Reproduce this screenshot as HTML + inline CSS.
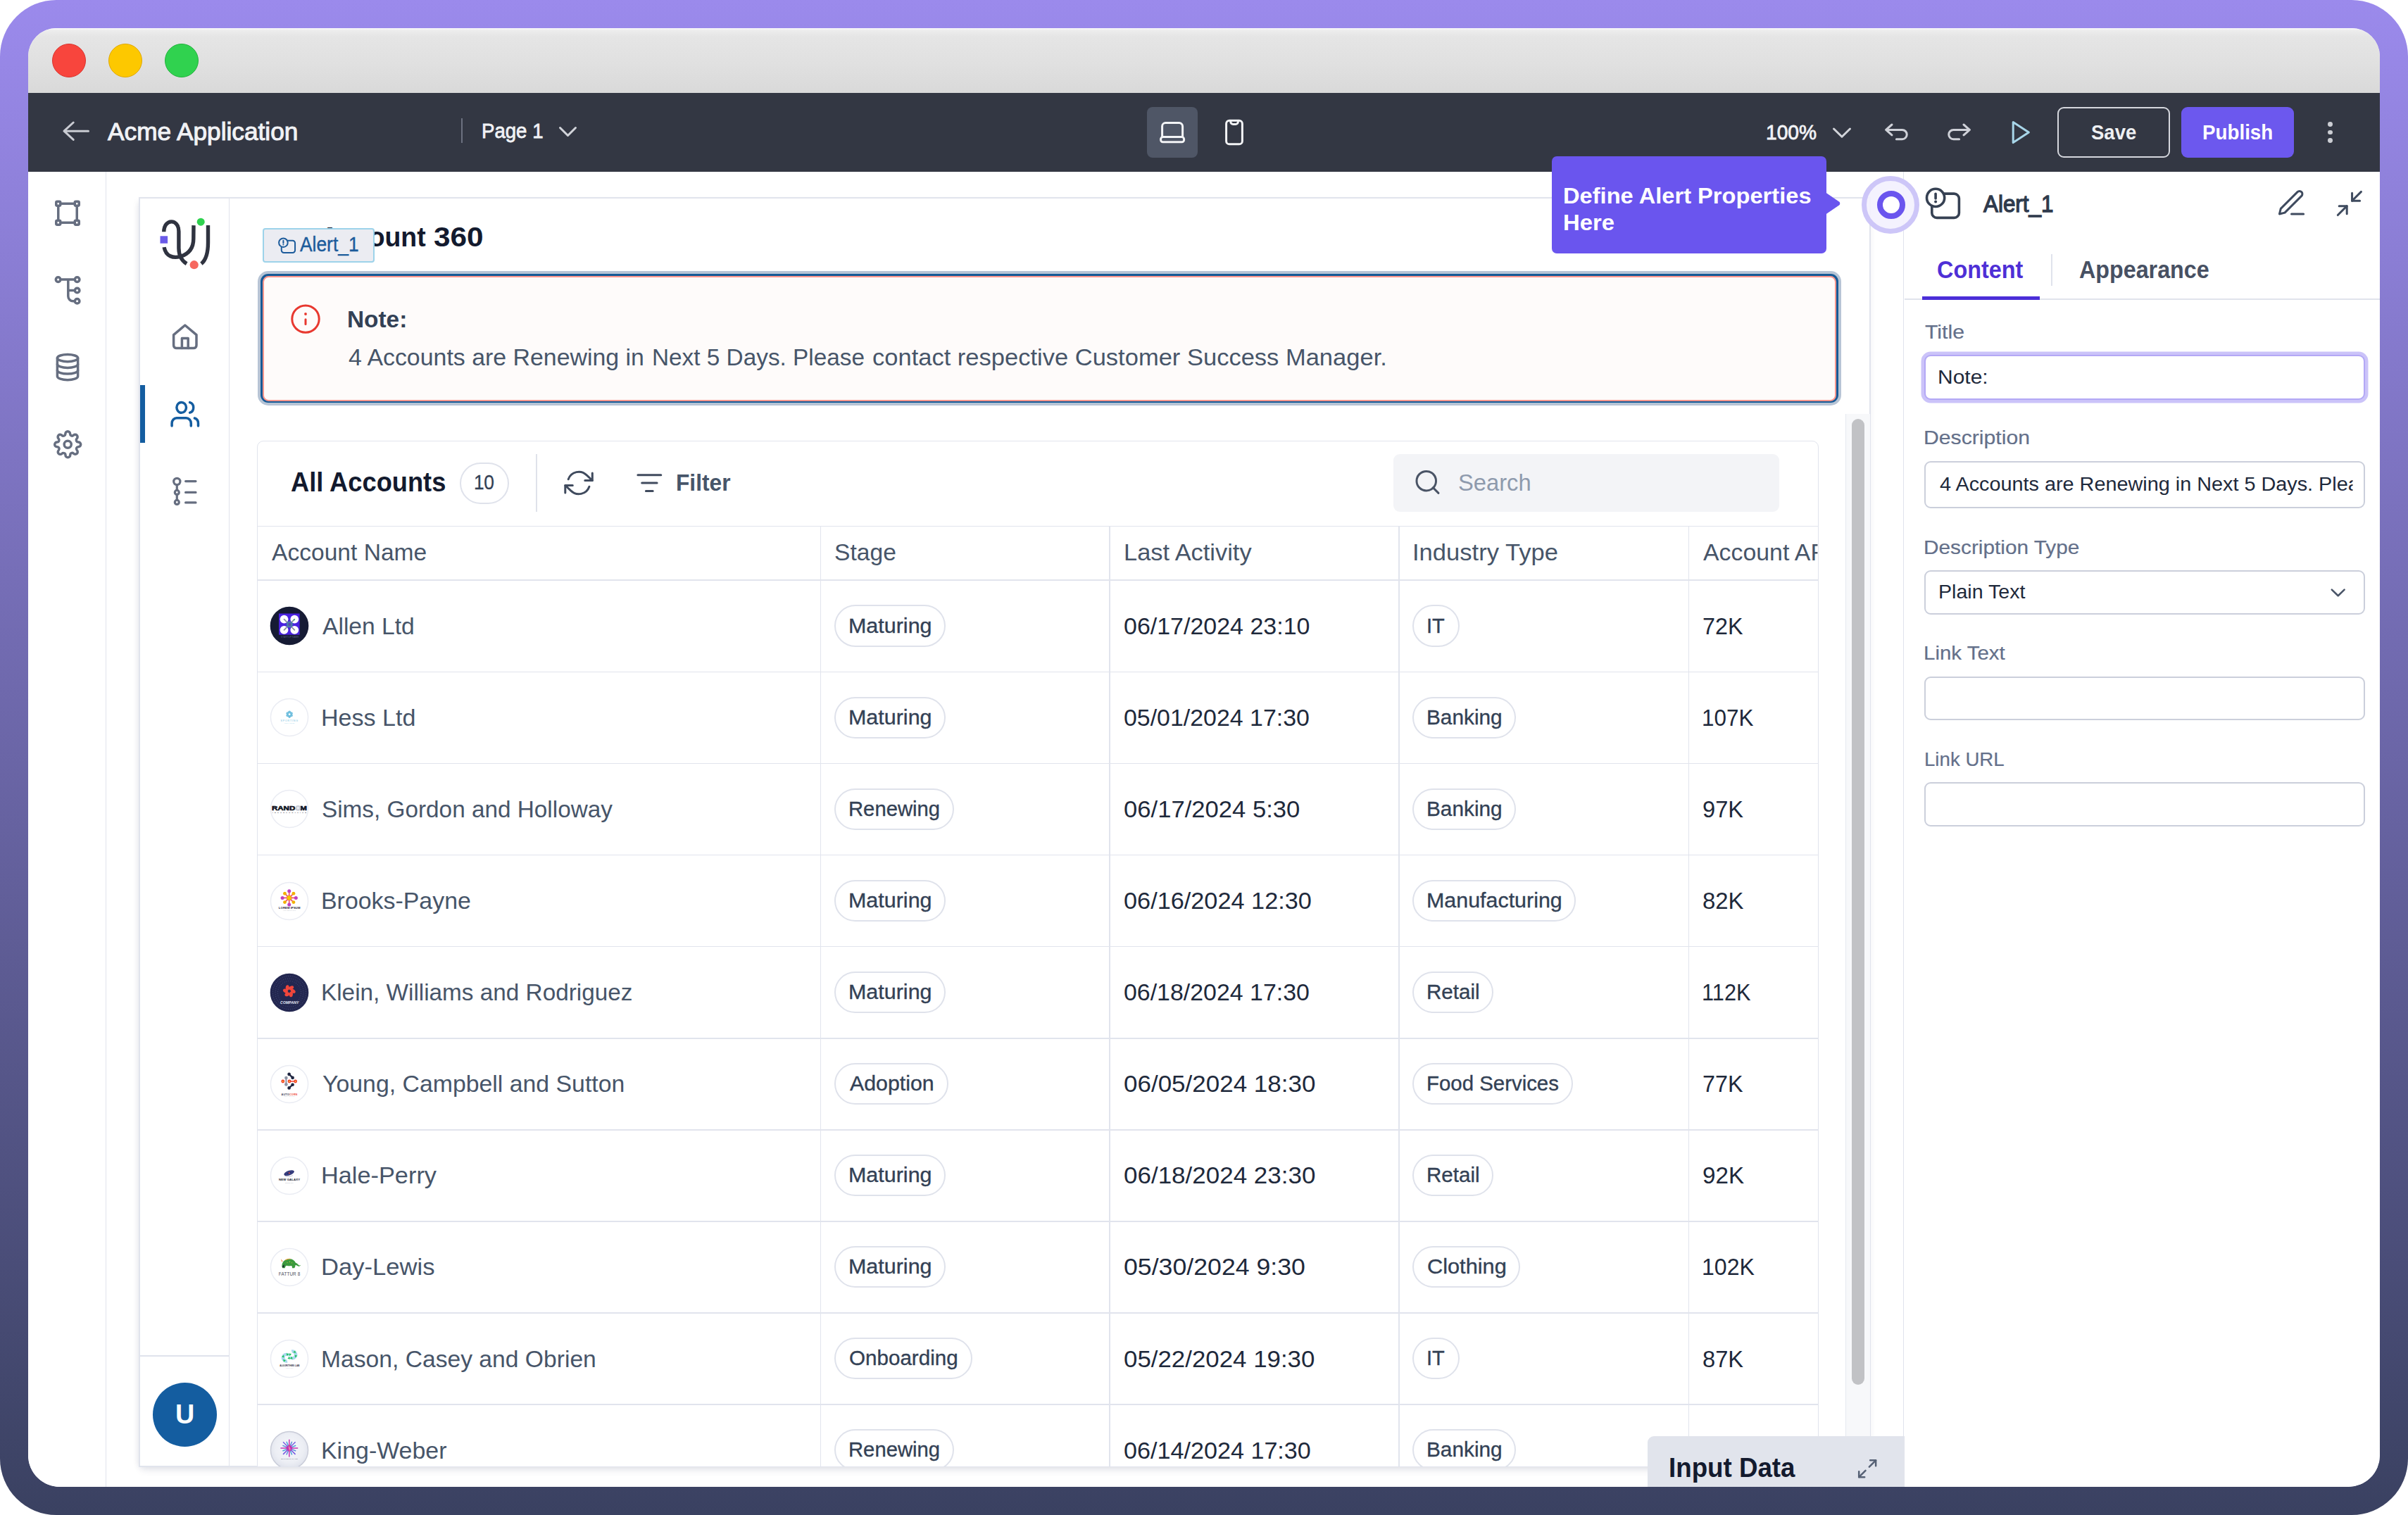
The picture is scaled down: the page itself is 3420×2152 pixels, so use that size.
<!DOCTYPE html><html lang="en"><head><meta charset="utf-8"><title>Acme Application</title><style>
*{box-sizing:border-box;margin:0;padding:0}
html,body{width:3420px;height:2152px;overflow:hidden;background:#fff}
body{font-family:"Liberation Sans",sans-serif;position:relative}
.a{position:absolute}
.i{position:absolute;overflow:visible;display:block}
.t{position:absolute;white-space:nowrap;line-height:1;transform-origin:0 0;font-kerning:normal}
#frame{left:0;top:0;width:3420px;height:2152px;border-radius:80px;background:linear-gradient(180deg,#9b8aec 0%,#3a4161 100%)}
#win{left:0;top:0;width:3420px;height:2152px;clip-path:inset(40px 40px 40px 40px round 40px 40px 45px 45px);background:#fff}
#mac{left:40px;top:40px;width:3340px;height:92px;background:linear-gradient(180deg,#fbfbfb 0px,#ededed 3px,#e5e5e5 12px,#e0e0e0 52px,#d9d9d9 92px)}
.tl{border-radius:50%;width:48px;height:48px;top:62px}
#nav{left:40px;top:132px;width:3340px;height:112px;background:#333743}
#side{left:40px;top:244px;width:110.5px;height:1868px;background:#fff;border-right:1.5px solid #e0e3ec}
#app{left:197.3px;top:280.3px;width:2459.6px;height:1803.4px;background:#fff;border:2px solid #e1e4ed;box-shadow:0 7px 10px -3px rgba(40,50,90,.11),-4px 2px 9px -4px rgba(40,50,90,.10)}
#appside{left:199px;top:282px;width:127px;height:1800px;border-right:1.5px solid #e0e3ec}
#panel{left:2703px;top:244px;width:677px;height:1868px;background:#fff;border-left:1.5px solid #e0e3ec}
.chip{position:absolute;height:59.2px;border:2px solid #dfe2eb;border-radius:30px;background:#fff}
.hl{position:absolute;height:1.5px;background:#e1e4ed;left:365px;width:2217px}
.vl{position:absolute;width:1.5px;background:#e1e4ed;top:747px;height:1336px}
.inp{position:absolute;left:2733px;width:626px;border:2px solid #cbcfdb;border-radius:9px;background:#fff}
</style></head><body>
<div class="a" id="frame"></div><div class="a" id="win">
<div class="a" id="mac"></div>
<div class="a tl" style="left:74px;background:#f8453d;border:1px solid #d8352e"></div>
<div class="a tl" style="left:154px;background:#fdc800;border:1px solid #dfa800"></div>
<div class="a tl" style="left:233.5px;background:#30d24f;border:1px solid #22b23c"></div>
<div class="a" id="nav"></div>
<svg class="i" style="left:80px;top:160px;" width="60" height="52" viewBox="80 160 60 52"><g fill="none" stroke="#c9cbd2" stroke-width="3" stroke-linecap="round" stroke-linejoin="round"><path d="M125.5 186.2H91M104.2 174L91 186.2l13.2 12.2"/></g></svg>
<span class="t" style="left:153.30px;top:169.67px;font-size:34.3px;font-weight:400;color:#f1f2f5;transform:scaleX(1.0277);letter-spacing:0.000px;-webkit-text-stroke:1.0px #f1f2f5;">Acme Application</span>
<div class="a" style="left:655px;top:168px;width:2px;height:35px;background:#6c7180"></div>
<span class="t" style="left:683.96px;top:171.43px;font-size:30.09px;font-weight:400;color:#f1f2f5;transform:scaleX(0.9179);letter-spacing:0.000px;-webkit-text-stroke:0.8px #f1f2f5;">Page 1</span>
<svg class="i" style="left:786px;top:172px;" width="42" height="30" viewBox="786 172 42 30"><g fill="none" stroke="#d2d4da" stroke-width="3" stroke-linecap="round" stroke-linejoin="round"><path d="M795.5 181.5l11 11 11-11"/></g></svg>
<div class="a" style="left:1629px;top:152px;width:72px;height:72px;border-radius:8px;background:#4f5666"></div>
<svg class="i" style="left:1640px;top:165px;" width="50" height="45" viewBox="1640 165 50 45"><g fill="none" stroke="#f3f4f6" stroke-width="3" stroke-linecap="round" stroke-linejoin="round"><path d="M1650.6 194.6V179.4a4.8 4.8 0 0 1 4.8-4.8h19.4a4.8 4.8 0 0 1 4.8 4.8V194.6"/><rect x="1648.6" y="194.6" width="33" height="7.2" rx="3"/></g></svg>
<svg class="i" style="left:1735px;top:165px;" width="37" height="47" viewBox="1735 165 37 47"><g fill="none" stroke="#f3f4f6" stroke-width="3" stroke-linecap="round" stroke-linejoin="round"><rect x="1741.6" y="171.3" width="22.8" height="33.5" rx="4.4"/><path d="M1747.8 171.8v1.2a3.6 3.6 0 0 0 3.6 3.6h3.4a3.6 3.6 0 0 0 3.6-3.6v-1.2"/></g></svg>
<span class="t" style="left:2507.89px;top:173.02px;font-size:29.51px;font-weight:400;color:#f1f2f5;transform:scaleX(0.9560);letter-spacing:0.000px;-webkit-text-stroke:0.8px #f1f2f5;">100%</span>
<svg class="i" style="left:2596px;top:174px;" width="40" height="30" viewBox="2596 174 40 30"><g fill="none" stroke="#d2d4da" stroke-width="3" stroke-linecap="round" stroke-linejoin="round"><path d="M2604.5 183l11.5 11.2 11.5-11.2"/></g></svg>
<svg class="i" style="left:2670px;top:168px;" width="46" height="38" viewBox="2670 168 46 38"><g fill="none" stroke="#cfd1d8" stroke-width="3" stroke-linecap="round" stroke-linejoin="round"><path d="M2687 177l-8.4 7.4 8.4 7.4M2678.8 184.4H2701.6a6.65 6.65 0 0 1 0 13.3H2693.4"/></g></svg>
<svg class="i" style="left:2760px;top:168px;" width="46" height="38" viewBox="2760 168 46 38"><g fill="none" stroke="#cfd1d8" stroke-width="3" stroke-linecap="round" stroke-linejoin="round"><path d="M2789 177l8.4 7.4-8.4 7.4M2797.2 184.4H2774.4a6.65 6.65 0 0 0 0 13.3H2782.6"/></g></svg>
<svg class="i" style="left:2850px;top:165px;" width="40" height="45" viewBox="2850 165 40 45"><g fill="none" stroke="#a8d6e9" stroke-width="3" stroke-linecap="round" stroke-linejoin="round"><path d="M2859.2 173.4L2881.4 188l-22.2 14.6z"/></g></svg>
<div class="a" style="left:2922px;top:152px;width:160px;height:72px;border:2px solid #d5d7dd;border-radius:9px"></div>
<span class="t" style="left:2970.30px;top:172.28px;font-size:30.38px;font-weight:700;color:#eef0f3;transform:scaleX(0.9065);letter-spacing:0.000px;">Save</span>
<div class="a" style="left:3098px;top:152px;width:160px;height:72px;border-radius:9px;background:#6c58ee"></div>
<span class="t" style="left:3127.67px;top:172.28px;font-size:30.38px;font-weight:700;color:#fff;transform:scaleX(0.9139);letter-spacing:0.000px;">Publish</span>
<div class="a" style="left:3306.2999999999997px;top:172.79999999999998px;width:6.8px;height:6.8px;border-radius:50%;background:#cbcdd3"></div>
<div class="a" style="left:3306.2999999999997px;top:184.7px;width:6.8px;height:6.8px;border-radius:50%;background:#cbcdd3"></div>
<div class="a" style="left:3306.2999999999997px;top:196.4px;width:6.8px;height:6.8px;border-radius:50%;background:#cbcdd3"></div>
<div class="a" id="side"></div>
<svg class="i" style="left:70px;top:276px;" width="52" height="54" viewBox="70 276 52 54"><g fill="none" stroke="#666e80" stroke-width="3.5" stroke-linecap="round" stroke-linejoin="round"><rect x="79.75" y="286.25" width="6" height="6" rx="1.4"/><rect x="106.25" y="286.25" width="6" height="6" rx="1.4"/><rect x="79.75" y="313.25" width="6" height="6" rx="1.4"/><rect x="106.25" y="313.25" width="6" height="6" rx="1.4"/><path d="M87.6 289.25H104.4M87.6 316.25H104.4M82.75 294.1V311.4M109.25 294.1V311.4"/></g></svg>
<svg class="i" style="left:70px;top:385px;" width="52" height="55" viewBox="70 385 52 55"><g fill="none" stroke="#666e80" stroke-width="3.5" stroke-linecap="round" stroke-linejoin="round"><circle cx="82.6" cy="397.1" r="3.3"/><circle cx="109.6" cy="397.1" r="3.3"/><circle cx="109.6" cy="412.5" r="3.3"/><circle cx="109.6" cy="427.7" r="3.3"/><path d="M87.7 397.1H104.5M96.8 397.1V420.7a7 7 0 0 0 7 7h0.7M96.8 412.5H104.5"/></g></svg>
<svg class="i" style="left:70px;top:495px;" width="52" height="53" viewBox="70 495 52 53"><g fill="none" stroke="#666e80" stroke-width="3.5" stroke-linecap="round" stroke-linejoin="round"><ellipse cx="96" cy="508.6" rx="14.6" ry="5.1"/><path d="M81.4 508.6V534.6c0 2.8 6.5 5.1 14.6 5.1s14.6-2.3 14.6-5.1V508.6"/><path d="M81.4 517.3c0 2.8 6.5 5.1 14.6 5.1s14.6-2.3 14.6-5.1M81.4 526c0 2.8 6.5 5.1 14.6 5.1s14.6-2.3 14.6-5.1"/></g></svg>
<svg class="i" style="left:70px;top:605px;" width="52" height="53" viewBox="70 605 52 53"><g transform="translate(76.04,611.14) scale(1.68,1.68)" fill="none" stroke="#666e80" stroke-width="3.5" stroke-linecap="round" stroke-linejoin="round"><circle cx="12" cy="12" r="3" vector-effect="non-scaling-stroke"/><path d="M19.4 15a1.65 1.65 0 0 0 .33 1.82l.06.06a2 2 0 0 1 0 2.83 2 2 0 0 1-2.83 0l-.06-.06a1.65 1.65 0 0 0-1.82-.33 1.65 1.65 0 0 0-1 1.51V21a2 2 0 0 1-2 2 2 2 0 0 1-2-2v-.09A1.65 1.65 0 0 0 9 19.4a1.65 1.65 0 0 0-1.82.33l-.06.06a2 2 0 0 1-2.83 0 2 2 0 0 1 0-2.83l.06-.06a1.65 1.65 0 0 0 .33-1.82 1.65 1.65 0 0 0-1.51-1H3a2 2 0 0 1-2-2 2 2 0 0 1 2-2h.09A1.65 1.65 0 0 0 4.6 9a1.65 1.65 0 0 0-.33-1.82l-.06-.06a2 2 0 0 1 0-2.83 2 2 0 0 1 2.83 0l.06.06a1.65 1.65 0 0 0 1.82.33H9a1.65 1.65 0 0 0 1-1.51V3a2 2 0 0 1 2-2 2 2 0 0 1 2 2v.09a1.65 1.65 0 0 0 1 1.51 1.65 1.65 0 0 0 1.82-.33l.06-.06a2 2 0 0 1 2.83 0 2 2 0 0 1 0 2.83l-.06.06a1.65 1.65 0 0 0-.33 1.82V9a1.65 1.65 0 0 0 1.51 1H21a2 2 0 0 1 2 2 2 2 0 0 1-2 2h-.09a1.65 1.65 0 0 0-1.51 1z" vector-effect="non-scaling-stroke"/></g></svg>
<div class="a" id="app"></div><div class="a" id="appside"></div>
<svg class="i" style="left:220px;top:300px;" width="86" height="92" viewBox="220 300 86 92"><g fill="none" stroke="#2f3340" stroke-width="5.4" stroke-linecap="butt" stroke-linejoin="round"><path d="M232.8 329.3 C232.8 310.2 253.9 310.2 253.9 328.7 L253.9 352.4 C253.9 364.3 259.2 370.9 265.1 374.6"/><path d="M233.1 351.1 C235.4 364.3 246.0 367.2 256.6 364.3 C268.4 360.4 274.8 352.4 274.8 339.2 L275.0 320.1"/><path d="M295.5 320.1 L295.5 344.5 C295.5 360.4 292.2 369.6 285.9 374.6"/></g><rect x="227.5" y="335.3" width="10.6" height="10.4" fill="#6b5be8"/><circle cx="285.2" cy="315.2" r="5.5" fill="#2fd24f"/><circle cx="275.7" cy="376.2" r="6.1" fill="#f6685f"/></svg>
<svg class="i" style="left:238px;top:452px;" width="50" height="50" viewBox="238 452 50 50"><g fill="none" stroke="#666e80" stroke-width="3.5" stroke-linecap="round" stroke-linejoin="round"><path d="M246.6 475.6L262.8 462l16.2 13.6V490.6a4 4 0 0 1-4 4H250.6a4 4 0 0 1-4-4z"/><path d="M258.4 494.4V480.4h8.8V494.4"/></g></svg>
<div class="a" style="left:199px;top:547px;width:6.8px;height:82px;background:#145da0"></div>
<svg class="i" style="left:236px;top:562px;" width="54" height="52" viewBox="236 562 54 52"><g transform="translate(242.4,565.8) scale(1.7000000000000002,1.866666666666668)" fill="none" stroke="#145da0" stroke-width="3.5" stroke-linecap="round" stroke-linejoin="round"><path d="M17 21v-2a4 4 0 0 0-4-4H5a4 4 0 0 0-4 4v2" vector-effect="non-scaling-stroke"/><circle cx="9" cy="7" r="4" vector-effect="non-scaling-stroke"/><path d="M23 21v-2a4 4 0 0 0-3-3.87" vector-effect="non-scaling-stroke"/><path d="M16 3.13a4 4 0 0 1 0 7.75" vector-effect="non-scaling-stroke"/></g></svg>
<svg class="i" style="left:238px;top:670px;" width="50" height="54" viewBox="238 670 50 54"><g fill="none" stroke="#666e80" stroke-width="3.2" stroke-linecap="round" stroke-linejoin="round"><circle cx="251.3" cy="684" r="4.6"/><circle cx="251.3" cy="699.4" r="3"/><circle cx="251.3" cy="713.4" r="3"/><path d="M251.3 688.6V696.4M251.3 702.4V710.4M263.6 683.6H278M263.6 699.4H278M263.6 713.9H278"/></g></svg>
<div class="a" style="left:199px;top:1925px;width:126px;height:1.5px;background:#e0e3ec"></div>
<div class="a" style="left:217px;top:1964px;width:91px;height:91px;border-radius:50%;background:#145da0"></div>
<span class="t" style="left:249.04px;top:1990.39px;font-size:38.52px;font-weight:700;color:#fff;transform:scaleX(0.9792);letter-spacing:0.000px;">U</span>
<span class="t" style="left:455.00px;top:316.78px;font-size:39.24px;font-weight:700;color:#131a2e;transform:scaleX(0.9536);letter-spacing:0.000px;">Account</span>
<span class="t" style="left:616.20px;top:316.78px;font-size:39.24px;font-weight:700;color:#131a2e;transform:scaleX(1.0783);letter-spacing:0.000px;">360</span>
<div class="a" style="left:373px;top:323.5px;width:158.5px;height:49.5px;background:#ebecf2;border:2px solid #9dd3ea;border-radius:4px"></div>
<svg class="i" style="left:390px;top:332px;" width="34" height="34" viewBox="390 332 34 34"><g fill="none" stroke="#1c5b9b" stroke-width="2" stroke-linecap="round" stroke-linejoin="round"><circle cx="402.4" cy="344.7" r="6.30"/><path d="M408.15 341.80 H415.55 a3.50 3.50 0 0 1 3.50 3.50 V355.45 a3.50 3.50 0 0 1 -3.50 3.50 H403.25 a3.50 3.50 0 0 1 -3.50 -3.50 V350.65"/><line x1="402.4" y1="341.85" x2="402.4" y2="345.20"/></g><circle cx="402.4" cy="347.50" r="1.00" fill="#1c5b9b" stroke="none"/></svg>
<span class="t" style="left:426.30px;top:333.39px;font-size:29.07px;font-weight:400;color:#1c5b9b;transform:scaleX(0.9074);letter-spacing:0.000px;-webkit-text-stroke:0.4px #1c5b9b;">Alert_1</span>
<div class="a" style="left:365.6px;top:385px;width:2249.6px;height:191.4px;border-radius:15px;background:#b7c4d5"></div>
<div class="a" style="left:370px;top:389.3px;width:2241px;height:182.8px;border-radius:11px;background:#165a96"></div>
<div class="a" style="left:372.6px;top:391.8px;width:2235.8px;height:177.8px;border-radius:8.5px;background:#fefbfa;border:2.1px solid #ff968c"></div>
<svg class="i" style="left:410px;top:430px;" width="48" height="48" viewBox="410 430 48 48"><g fill="none" stroke="#e8382f" stroke-width="3" stroke-linecap="round" stroke-linejoin="round"><circle cx="434" cy="453.1" r="19.2"/><line x1="434" y1="453.8" x2="434" y2="460.6"/></g><circle cx="434" cy="446" r="1.9" fill="#e8382f"/></svg>
<span class="t" style="left:492.99px;top:436.75px;font-size:33.14px;font-weight:700;color:#334155;transform:scaleX(1.0074);letter-spacing:-0.000px;">Note:</span>
<span class="t" style="left:495.00px;top:491.92px;font-size:32.7px;font-weight:400;color:#475569;transform:scaleX(1.0364);letter-spacing:0.000px;">4 Accounts are Renewing in </span>
<span class="t" style="left:926.46px;top:491.92px;font-size:32.7px;font-weight:400;color:#475569;transform:scaleX(1.0200);letter-spacing:0.000px;">Next 5 Days. Please </span>
<span class="t" style="left:1238.54px;top:491.92px;font-size:32.7px;font-weight:400;color:#475569;transform:scaleX(1.0558);letter-spacing:0.000px;">contact respective Customer Success Manager.</span>
<div class="a" style="left:0;top:0;width:3420px;height:2082.5px;overflow:hidden">
<div class="a" style="left:364.5px;top:625.5px;width:2218.5px;height:1470px;border:1.5px solid #e1e4ed;border-radius:9px 9px 0 0;background:#fff"></div>
<span class="t" style="left:412.50px;top:666.44px;font-size:38.23px;font-weight:700;color:#131a2e;transform:scaleX(0.9491);letter-spacing:0.000px;">All Accounts</span>
<div class="a chip" style="left:652.5px;top:656.5px;width:70.5px;height:59px;border-radius:30px"></div>
<span class="t" style="left:673.40px;top:670.77px;font-size:29.22px;font-weight:400;color:#334155;transform:scaleX(0.9000);letter-spacing:-0.472px;-webkit-text-stroke:0.3px #334155;">10</span>
<div class="a" style="left:761px;top:645px;width:2px;height:82px;background:#dfe2ea"></div>
<svg class="i" style="left:795px;top:660px;" width="55" height="52" viewBox="795 660 55 52"><g transform="translate(801.05,665.0) scale(1.75,1.75)" fill="none" stroke="#404b5e" stroke-width="3" stroke-linecap="round" stroke-linejoin="round"><polyline points="23 4 23 10 17 10" vector-effect="non-scaling-stroke"/><polyline points="1 20 1 14 7 14" vector-effect="non-scaling-stroke"/><path d="M3.51 9a9 9 0 0 1 14.85-3.36L23 10M1 14l4.64 4.36A9 9 0 0 0 20.49 15" vector-effect="non-scaling-stroke"/></g></svg>
<svg class="i" style="left:898px;top:666px;" width="48" height="40" viewBox="898 666 48 40"><g fill="none" stroke="#404b5e" stroke-width="3" stroke-linecap="round" stroke-linejoin="round"><path d="M905.9 674.7H938.8M911.7 686.1H933.1M917.4 697.6H927.2"/></g></svg>
<span class="t" style="left:959.63px;top:669.43px;font-size:33.87px;font-weight:700;color:#475569;transform:scaleX(0.9367);letter-spacing:0.000px;">Filter</span>
<div class="a" style="left:1979px;top:645px;width:548px;height:82px;border-radius:9px;background:#f3f4f7"></div>
<svg class="i" style="left:2004px;top:662px;" width="50" height="48" viewBox="2004 662 50 48"><g transform="translate(2006.84,664.24) scale(1.72,1.72)" fill="none" stroke="#4a5466" stroke-width="3" stroke-linecap="round" stroke-linejoin="round"><circle cx="11" cy="11" r="8" vector-effect="non-scaling-stroke"/><line x1="21" y1="21" x2="16.65" y2="16.65" vector-effect="non-scaling-stroke"/></g></svg>
<span class="t" style="left:2071.43px;top:668.66px;font-size:33.72px;font-weight:400;color:#8e9aad;transform:scaleX(0.9704);letter-spacing:0.000px;">Search</span>
<div class="hl" style="top:746.5px"></div><div class="hl" style="top:823.2px"></div>
<div class="vl" style="left:1164.5px"></div>
<div class="vl" style="left:1575px"></div>
<div class="vl" style="left:1986.3px"></div>
<div class="vl" style="left:2397.5px"></div>
<span class="t" style="left:386.00px;top:769.29px;font-size:32.85px;font-weight:400;color:#475569;transform:scaleX(1.0231);letter-spacing:0.000px;">Account Name</span>
<span class="t" style="left:1185.48px;top:769.29px;font-size:32.85px;font-weight:400;color:#475569;transform:scaleX(1.0236);letter-spacing:0.000px;">Stage</span>
<span class="t" style="left:1596.20px;top:769.29px;font-size:32.85px;font-weight:400;color:#475569;transform:scaleX(1.0476);letter-spacing:0.000px;">Last Activity</span>
<span class="t" style="left:2005.64px;top:769.29px;font-size:32.85px;font-weight:400;color:#475569;transform:scaleX(1.0529);letter-spacing:0.000px;">Industry Type</span>
<span class="t" style="left:2419.00px;top:769.29px;font-size:32.85px;font-weight:400;color:#475569;transform:scaleX(1.0311);letter-spacing:0.000px;clip-path:inset(-10px 14px -10px -5px);">Account AR</span>
<div class="hl" style="top:953.6px"></div>
<svg class="i" style="left:381.3px;top:859.2px" width="60" height="60" viewBox="381.3 859.2 60 60"><defs><clipPath id="c889"><circle cx="411.3" cy="889.1999999999999" r="26.6"/></clipPath></defs><circle cx="411.3" cy="889.1999999999999" r="26.55" fill="#161b34" stroke="#161b34" stroke-width="1.5"/><g clip-path="url(#c889)"><rect x="396.3" y="871.6999999999999" width="29.6" height="30.2" fill="#4a22e0"/><circle cx="403.8" cy="879.8" r="5.9" fill="#fff"/><circle cx="403.8" cy="894.9999999999999" r="5.9" fill="#fff"/><circle cx="418.6" cy="879.8" r="5.9" fill="#fff"/><circle cx="418.6" cy="894.9999999999999" r="5.9" fill="#fff"/><path d="M403.8 879.8L418.6 894.9999999999999M418.6 879.8L403.8 894.9999999999999" stroke="#8d93a3" stroke-width="1.8" stroke-linecap="round"/><circle cx="411.6" cy="887.1999999999999" r="4.6" fill="#4878ad"/><circle cx="411.6" cy="887.1999999999999" r="2" fill="#5a4aa8"/><circle cx="418.0" cy="880.5999999999999" r="0.9" fill="#22c55e"/><text x="412.1" y="906.7" font-family="Liberation Sans, sans-serif" font-size="2.9" font-weight="400" fill="#59607e" text-anchor="middle" letter-spacing="0.25" >STARTUP NAME</text></g></svg>
<span class="t" style="left:458.30px;top:872.73px;font-size:33.87px;font-weight:400;color:#475569;transform:scaleX(0.9928);letter-spacing:0.000px;">Allen Ltd</span>
<div class="chip" style="left:1185px;top:859.4px;width:158.3px"></div>
<span class="t" style="left:1204.97px;top:873.56px;font-size:29.94px;font-weight:400;color:#334155;transform:scaleX(1.0175);letter-spacing:0.000px;-webkit-text-stroke:0.35px #334155;">Maturing</span>
<span class="t" style="left:1596.40px;top:872.73px;font-size:33.87px;font-weight:400;color:#1e293b;transform:scaleX(1.0032);letter-spacing:0.000px;">06/17/2024 23:10</span>
<div class="chip" style="left:2006.2px;top:859.4px;width:66.6px"></div>
<span class="t" style="left:2026.26px;top:873.56px;font-size:29.94px;font-weight:400;color:#334155;transform:scaleX(0.9705);letter-spacing:0.000px;-webkit-text-stroke:0.35px #334155;">IT</span>
<span class="t" style="left:2417.65px;top:872.73px;font-size:33.87px;font-weight:400;color:#1e293b;transform:scaleX(0.9537);letter-spacing:0.000px;">72K</span>
<div class="hl" style="top:1083.7px"></div>
<svg class="i" style="left:381.3px;top:989.3px" width="60" height="60" viewBox="381.3 989.3 60 60"><defs><clipPath id="c1019"><circle cx="411.3" cy="1019.3" r="26.6"/></clipPath></defs><circle cx="411.3" cy="1019.3" r="26.55" fill="#fff" stroke="#eaecf3" stroke-width="1.5"/><g clip-path="url(#c1019)"><circle cx="414.08" cy="1016.55" r="2" fill="#5db6d9" opacity=".85"/><circle cx="411.40" cy="1018.10" r="2" fill="#5db6d9" opacity=".85"/><circle cx="408.72" cy="1016.55" r="2" fill="#5db6d9" opacity=".85"/><circle cx="408.72" cy="1013.45" r="2" fill="#5db6d9" opacity=".85"/><circle cx="411.40" cy="1011.90" r="2" fill="#5db6d9" opacity=".85"/><circle cx="414.08" cy="1013.45" r="2" fill="#5db6d9" opacity=".85"/><circle cx="411.40000000000003" cy="1015.0" r="1.3" fill="#fff"/><rect x="410.90000000000003" y="1017.9" width="1" height="2.2" fill="#5db6d9"/><text x="411.5" y="1024.9" font-family="Liberation Sans, sans-serif" font-size="3.6" font-weight="400" fill="#7cc4e2" text-anchor="middle" letter-spacing="0.85" >SPORTING</text><text x="411.5" y="1028.2" font-family="Liberation Sans, sans-serif" font-size="1.9" font-weight="400" fill="#a5d7ec" text-anchor="middle" letter-spacing="0.3" >GOLF SINCE</text></g></svg>
<span class="t" style="left:456.29px;top:1002.83px;font-size:33.87px;font-weight:400;color:#475569;transform:scaleX(1.0055);letter-spacing:0.000px;">Hess Ltd</span>
<div class="chip" style="left:1185px;top:989.5px;width:158.3px"></div>
<span class="t" style="left:1204.97px;top:1003.66px;font-size:29.94px;font-weight:400;color:#334155;transform:scaleX(1.0175);letter-spacing:0.000px;-webkit-text-stroke:0.35px #334155;">Maturing</span>
<span class="t" style="left:1596.40px;top:1002.83px;font-size:33.87px;font-weight:400;color:#1e293b;transform:scaleX(1.0009);letter-spacing:0.000px;">05/01/2024 17:30</span>
<div class="chip" style="left:2006.2px;top:989.5px;width:147.0px"></div>
<span class="t" style="left:2026.21px;top:1003.66px;font-size:29.94px;font-weight:400;color:#334155;transform:scaleX(0.9949);letter-spacing:0.000px;-webkit-text-stroke:0.35px #334155;">Banking</span>
<span class="t" style="left:2416.74px;top:1002.83px;font-size:33.87px;font-weight:400;color:#1e293b;transform:scaleX(0.9291);letter-spacing:0.000px;">107K</span>
<div class="hl" style="top:1213.8px"></div>
<svg class="i" style="left:381.3px;top:1119.4px" width="60" height="60" viewBox="381.3 1119.4 60 60"><defs><clipPath id="c1149"><circle cx="411.3" cy="1149.3999999999999" r="26.6"/></clipPath></defs><circle cx="411.3" cy="1149.3999999999999" r="26.55" fill="#fff" stroke="#eaecf3" stroke-width="1.5"/><g clip-path="url(#c1149)"><text x="411.2" y="1151.3" font-family="Liberation Sans, sans-serif" font-size="8.6" font-weight="700" fill="#10131f" text-anchor="middle" letter-spacing="0" stroke="#10131f" stroke-width="0.55" textLength="50" lengthAdjust="spacingAndGlyphs">RAND&#9679;M</text><circle cx="423.6" cy="1148.1999999999998" r="3.9" fill="#c8ccd6"/><circle cx="423.6" cy="1148.1999999999998" r="1.8" fill="#eceef3"/><text x="411.3" y="1155.0" font-family="Liberation Sans, sans-serif" font-size="2.4" font-weight="700" fill="#10131f" text-anchor="middle" letter-spacing="0" textLength="48" lengthAdjust="spacing">INCORPORATION</text></g></svg>
<span class="t" style="left:457.32px;top:1132.93px;font-size:33.87px;font-weight:400;color:#475569;transform:scaleX(0.9839);letter-spacing:0.000px;">Sims, Gordon and Holloway</span>
<div class="chip" style="left:1185px;top:1119.6px;width:170.0px"></div>
<span class="t" style="left:1205.05px;top:1133.76px;font-size:29.94px;font-weight:400;color:#334155;transform:scaleX(0.9769);letter-spacing:0.000px;-webkit-text-stroke:0.35px #334155;">Renewing</span>
<span class="t" style="left:1596.38px;top:1132.93px;font-size:33.87px;font-weight:400;color:#1e293b;transform:scaleX(1.0229);letter-spacing:0.000px;">06/17/2024 5:30</span>
<div class="chip" style="left:2006.2px;top:1119.6px;width:147.0px"></div>
<span class="t" style="left:2026.21px;top:1133.76px;font-size:29.94px;font-weight:400;color:#334155;transform:scaleX(0.9949);letter-spacing:0.000px;-webkit-text-stroke:0.35px #334155;">Banking</span>
<span class="t" style="left:2417.64px;top:1132.93px;font-size:33.87px;font-weight:400;color:#1e293b;transform:scaleX(0.9638);letter-spacing:0.000px;">97K</span>
<div class="hl" style="top:1343.9px"></div>
<svg class="i" style="left:381.3px;top:1249.5px" width="60" height="60" viewBox="381.3 1249.5 60 60"><defs><clipPath id="c1279"><circle cx="411.3" cy="1279.4999999999998" r="26.6"/></clipPath></defs><circle cx="411.3" cy="1279.4999999999998" r="26.55" fill="#fff" stroke="#eaecf3" stroke-width="1.5"/><g clip-path="url(#c1279)"><path d="M411.0 1274.9L411.00 1265.30" stroke="#f0506a" stroke-width="1.7"/><circle cx="411.00" cy="1265.30" r="2.5" fill="#c03fc0"/><path d="M411.0 1274.9L417.22 1268.68" stroke="#f0506a" stroke-width="1.7"/><circle cx="417.22" cy="1268.68" r="2.4" fill="#f3b000"/><path d="M411.0 1274.9L420.60 1274.90" stroke="#f0506a" stroke-width="1.7"/><circle cx="420.60" cy="1274.90" r="2.5" fill="#c03fc0"/><path d="M411.0 1274.9L417.22 1281.12" stroke="#f0506a" stroke-width="1.7"/><circle cx="417.22" cy="1281.12" r="2.4" fill="#f3b000"/><path d="M411.0 1274.9L411.00 1284.50" stroke="#f0506a" stroke-width="1.7"/><circle cx="411.00" cy="1284.50" r="2.5" fill="#c03fc0"/><path d="M411.0 1274.9L404.78 1281.12" stroke="#f0506a" stroke-width="1.7"/><circle cx="404.78" cy="1281.12" r="2.4" fill="#f3b000"/><path d="M411.0 1274.9L401.40 1274.90" stroke="#f0506a" stroke-width="1.7"/><circle cx="401.40" cy="1274.90" r="2.5" fill="#c03fc0"/><path d="M411.0 1274.9L404.78 1268.68" stroke="#f0506a" stroke-width="1.7"/><circle cx="404.78" cy="1268.68" r="2.4" fill="#f3b000"/><circle cx="411.0" cy="1274.9" r="3.6" fill="#f6c400" stroke="#f0506a" stroke-width="0.6"/><text x="411.5" y="1290.4" font-family="Liberation Sans, sans-serif" font-size="4.2" font-weight="700" fill="#1d2233" text-anchor="middle" letter-spacing="0.1" >LOREM IPSUM</text><text x="411.5" y="1293.8" font-family="Liberation Sans, sans-serif" font-size="2.0" font-weight="400" fill="#b9bcc8" text-anchor="middle" letter-spacing="0.2" >your tagline here</text></g></svg>
<span class="t" style="left:456.30px;top:1263.03px;font-size:33.87px;font-weight:400;color:#475569;transform:scaleX(1.0008);letter-spacing:0.000px;">Brooks-Payne</span>
<div class="chip" style="left:1185px;top:1249.7px;width:158.3px"></div>
<span class="t" style="left:1204.97px;top:1263.86px;font-size:29.94px;font-weight:400;color:#334155;transform:scaleX(1.0175);letter-spacing:0.000px;-webkit-text-stroke:0.35px #334155;">Maturing</span>
<span class="t" style="left:1596.39px;top:1263.03px;font-size:33.87px;font-weight:400;color:#1e293b;transform:scaleX(1.0123);letter-spacing:0.000px;">06/16/2024 12:30</span>
<div class="chip" style="left:2006.2px;top:1249.7px;width:232.0px"></div>
<span class="t" style="left:2026.17px;top:1263.86px;font-size:29.94px;font-weight:400;color:#334155;transform:scaleX(1.0158);letter-spacing:-0.000px;-webkit-text-stroke:0.35px #334155;">Manufacturing</span>
<span class="t" style="left:2417.63px;top:1263.03px;font-size:33.87px;font-weight:400;color:#1e293b;transform:scaleX(0.9721);letter-spacing:0.000px;">82K</span>
<div class="hl" style="top:1474.0px"></div>
<svg class="i" style="left:381.3px;top:1379.6px" width="60" height="60" viewBox="381.3 1379.6 60 60"><defs><clipPath id="c1409"><circle cx="411.3" cy="1409.6" r="26.6"/></clipPath></defs><circle cx="411.3" cy="1409.6" r="26.55" fill="#232750" stroke="#232750" stroke-width="1.5"/><g clip-path="url(#c1409)"><circle cx="419.5" cy="1427.9" r="0.45" fill="#5c6396"/><circle cx="416.8" cy="1428.8" r="0.45" fill="#5c6396"/><circle cx="414.0" cy="1429.4" r="0.45" fill="#5c6396"/><circle cx="411.1" cy="1429.6" r="0.45" fill="#5c6396"/><circle cx="408.3" cy="1429.4" r="0.45" fill="#5c6396"/><circle cx="405.5" cy="1428.7" r="0.45" fill="#5c6396"/><circle cx="402.8" cy="1427.7" r="0.45" fill="#5c6396"/><circle cx="400.4" cy="1426.3" r="0.45" fill="#5c6396"/><circle cx="398.1" cy="1424.6" r="0.45" fill="#5c6396"/><circle cx="396.1" cy="1422.6" r="0.45" fill="#5c6396"/><circle cx="394.4" cy="1420.3" r="0.45" fill="#5c6396"/><circle cx="393.0" cy="1417.8" r="0.45" fill="#5c6396"/><circle cx="392.1" cy="1415.1" r="0.45" fill="#5c6396"/><circle cx="391.5" cy="1412.3" r="0.45" fill="#5c6396"/><circle cx="391.3" cy="1409.4" r="0.45" fill="#5c6396"/><circle cx="391.5" cy="1406.6" r="0.45" fill="#5c6396"/><circle cx="392.2" cy="1403.8" r="0.45" fill="#5c6396"/><circle cx="393.2" cy="1401.1" r="0.45" fill="#5c6396"/><circle cx="394.6" cy="1398.7" r="0.45" fill="#5c6396"/><circle cx="396.3" cy="1396.4" r="0.45" fill="#5c6396"/><circle cx="398.3" cy="1394.4" r="0.45" fill="#5c6396"/><circle cx="400.6" cy="1392.7" r="0.45" fill="#5c6396"/><circle cx="403.1" cy="1391.3" r="0.45" fill="#5c6396"/><circle cx="405.8" cy="1390.4" r="0.45" fill="#5c6396"/><circle cx="408.6" cy="1389.8" r="0.45" fill="#5c6396"/><circle cx="411.5" cy="1389.6" r="0.45" fill="#5c6396"/><circle cx="414.3" cy="1389.8" r="0.45" fill="#5c6396"/><circle cx="417.1" cy="1390.5" r="0.45" fill="#5c6396"/><circle cx="419.8" cy="1391.5" r="0.45" fill="#5c6396"/><circle cx="422.2" cy="1392.9" r="0.45" fill="#5c6396"/><circle cx="424.5" cy="1394.6" r="0.45" fill="#5c6396"/><circle cx="426.5" cy="1396.6" r="0.45" fill="#5c6396"/><circle cx="428.2" cy="1398.9" r="0.45" fill="#5c6396"/><circle cx="429.6" cy="1401.4" r="0.45" fill="#5c6396"/><circle cx="430.5" cy="1404.1" r="0.45" fill="#5c6396"/><circle cx="431.1" cy="1406.9" r="0.45" fill="#5c6396"/><circle cx="431.3" cy="1409.8" r="0.45" fill="#5c6396"/><circle cx="431.1" cy="1412.6" r="0.45" fill="#5c6396"/><circle cx="430.4" cy="1415.4" r="0.45" fill="#5c6396"/><circle cx="429.4" cy="1418.1" r="0.45" fill="#5c6396"/><circle cx="428.0" cy="1420.5" r="0.45" fill="#5c6396"/><circle cx="426.3" cy="1422.8" r="0.45" fill="#5c6396"/><circle cx="424.3" cy="1424.8" r="0.45" fill="#5c6396"/><circle cx="422.0" cy="1426.5" r="0.45" fill="#5c6396"/><circle cx="409.8" cy="1386.1" r="0.45" fill="#5c6396"/><circle cx="412.7" cy="1386.1" r="0.45" fill="#5c6396"/><circle cx="415.5" cy="1386.5" r="0.45" fill="#5c6396"/><circle cx="418.3" cy="1387.2" r="0.45" fill="#5c6396"/><circle cx="420.9" cy="1388.2" r="0.45" fill="#5c6396"/><circle cx="423.4" cy="1389.5" r="0.45" fill="#5c6396"/><circle cx="425.8" cy="1391.1" r="0.45" fill="#5c6396"/><circle cx="427.9" cy="1393.0" r="0.45" fill="#5c6396"/><circle cx="429.8" cy="1395.1" r="0.45" fill="#5c6396"/><circle cx="431.4" cy="1397.4" r="0.45" fill="#5c6396"/><circle cx="432.7" cy="1399.9" r="0.45" fill="#5c6396"/><circle cx="433.7" cy="1402.6" r="0.45" fill="#5c6396"/><circle cx="434.4" cy="1405.3" r="0.45" fill="#5c6396"/><circle cx="434.8" cy="1408.1" r="0.45" fill="#5c6396"/><circle cx="434.8" cy="1411.0" r="0.45" fill="#5c6396"/><circle cx="434.4" cy="1413.8" r="0.45" fill="#5c6396"/><circle cx="433.7" cy="1416.6" r="0.45" fill="#5c6396"/><circle cx="432.7" cy="1419.2" r="0.45" fill="#5c6396"/><circle cx="431.4" cy="1421.7" r="0.45" fill="#5c6396"/><circle cx="429.8" cy="1424.1" r="0.45" fill="#5c6396"/><circle cx="427.9" cy="1426.2" r="0.45" fill="#5c6396"/><circle cx="425.8" cy="1428.1" r="0.45" fill="#5c6396"/><circle cx="423.5" cy="1429.7" r="0.45" fill="#5c6396"/><circle cx="421.0" cy="1431.0" r="0.45" fill="#5c6396"/><circle cx="418.3" cy="1432.0" r="0.45" fill="#5c6396"/><circle cx="415.6" cy="1432.7" r="0.45" fill="#5c6396"/><circle cx="412.8" cy="1433.1" r="0.45" fill="#5c6396"/><circle cx="409.9" cy="1433.1" r="0.45" fill="#5c6396"/><circle cx="407.1" cy="1432.7" r="0.45" fill="#5c6396"/><circle cx="404.3" cy="1432.0" r="0.45" fill="#5c6396"/><circle cx="401.7" cy="1431.0" r="0.45" fill="#5c6396"/><circle cx="399.2" cy="1429.7" r="0.45" fill="#5c6396"/><circle cx="396.8" cy="1428.1" r="0.45" fill="#5c6396"/><circle cx="394.7" cy="1426.2" r="0.45" fill="#5c6396"/><circle cx="392.8" cy="1424.1" r="0.45" fill="#5c6396"/><circle cx="391.2" cy="1421.8" r="0.45" fill="#5c6396"/><circle cx="389.9" cy="1419.3" r="0.45" fill="#5c6396"/><circle cx="388.9" cy="1416.6" r="0.45" fill="#5c6396"/><circle cx="388.2" cy="1413.9" r="0.45" fill="#5c6396"/><circle cx="387.8" cy="1411.1" r="0.45" fill="#5c6396"/><circle cx="387.8" cy="1408.2" r="0.45" fill="#5c6396"/><circle cx="388.2" cy="1405.4" r="0.45" fill="#5c6396"/><circle cx="388.9" cy="1402.6" r="0.45" fill="#5c6396"/><circle cx="389.9" cy="1400.0" r="0.45" fill="#5c6396"/><circle cx="391.2" cy="1397.5" r="0.45" fill="#5c6396"/><circle cx="392.8" cy="1395.1" r="0.45" fill="#5c6396"/><circle cx="394.7" cy="1393.0" r="0.45" fill="#5c6396"/><circle cx="396.8" cy="1391.1" r="0.45" fill="#5c6396"/><circle cx="399.1" cy="1389.5" r="0.45" fill="#5c6396"/><circle cx="401.6" cy="1388.2" r="0.45" fill="#5c6396"/><circle cx="404.3" cy="1387.2" r="0.45" fill="#5c6396"/><circle cx="407.0" cy="1386.5" r="0.45" fill="#5c6396"/><circle cx="399.7" cy="1397.9" r="0.45" fill="#5c6396"/><circle cx="401.9" cy="1396.0" r="0.45" fill="#5c6396"/><circle cx="404.4" cy="1394.6" r="0.45" fill="#5c6396"/><circle cx="407.1" cy="1393.6" r="0.45" fill="#5c6396"/><circle cx="410.0" cy="1393.2" r="0.45" fill="#5c6396"/><circle cx="412.8" cy="1393.2" r="0.45" fill="#5c6396"/><circle cx="415.7" cy="1393.7" r="0.45" fill="#5c6396"/><circle cx="418.4" cy="1394.7" r="0.45" fill="#5c6396"/><circle cx="420.9" cy="1396.1" r="0.45" fill="#5c6396"/><circle cx="423.0" cy="1398.0" r="0.45" fill="#5c6396"/><circle cx="424.9" cy="1400.2" r="0.45" fill="#5c6396"/><circle cx="426.3" cy="1402.7" r="0.45" fill="#5c6396"/><circle cx="427.3" cy="1405.4" r="0.45" fill="#5c6396"/><circle cx="427.7" cy="1408.3" r="0.45" fill="#5c6396"/><circle cx="427.7" cy="1411.1" r="0.45" fill="#5c6396"/><circle cx="427.2" cy="1414.0" r="0.45" fill="#5c6396"/><circle cx="426.2" cy="1416.7" r="0.45" fill="#5c6396"/><circle cx="424.8" cy="1419.2" r="0.45" fill="#5c6396"/><circle cx="422.9" cy="1421.3" r="0.45" fill="#5c6396"/><circle cx="420.7" cy="1423.2" r="0.45" fill="#5c6396"/><circle cx="418.2" cy="1424.6" r="0.45" fill="#5c6396"/><circle cx="415.5" cy="1425.6" r="0.45" fill="#5c6396"/><circle cx="412.6" cy="1426.0" r="0.45" fill="#5c6396"/><circle cx="409.8" cy="1426.0" r="0.45" fill="#5c6396"/><circle cx="406.9" cy="1425.5" r="0.45" fill="#5c6396"/><circle cx="404.2" cy="1424.5" r="0.45" fill="#5c6396"/><circle cx="401.7" cy="1423.1" r="0.45" fill="#5c6396"/><circle cx="399.6" cy="1421.2" r="0.45" fill="#5c6396"/><circle cx="397.7" cy="1419.0" r="0.45" fill="#5c6396"/><circle cx="396.3" cy="1416.5" r="0.45" fill="#5c6396"/><circle cx="395.3" cy="1413.8" r="0.45" fill="#5c6396"/><circle cx="394.9" cy="1410.9" r="0.45" fill="#5c6396"/><circle cx="394.9" cy="1408.1" r="0.45" fill="#5c6396"/><circle cx="395.4" cy="1405.2" r="0.45" fill="#5c6396"/><circle cx="396.4" cy="1402.5" r="0.45" fill="#5c6396"/><circle cx="397.8" cy="1400.0" r="0.45" fill="#5c6396"/><ellipse cx="416.40" cy="1407.40" rx="3.9" ry="2.5" transform="rotate(35 416.40 1407.40)" fill="#f0463b"/><ellipse cx="413.75" cy="1411.99" rx="3.9" ry="2.5" transform="rotate(95 413.75 1411.99)" fill="#f0463b"/><ellipse cx="408.45" cy="1411.99" rx="3.9" ry="2.5" transform="rotate(155 408.45 1411.99)" fill="#f0463b"/><ellipse cx="405.80" cy="1407.40" rx="3.9" ry="2.5" transform="rotate(215 405.80 1407.40)" fill="#f0463b"/><ellipse cx="408.45" cy="1402.81" rx="3.9" ry="2.5" transform="rotate(275 408.45 1402.81)" fill="#f0463b"/><ellipse cx="413.75" cy="1402.81" rx="3.9" ry="2.5" transform="rotate(335 413.75 1402.81)" fill="#f0463b"/><circle cx="411.1" cy="1407.4" r="1.7" fill="#242850"/><text x="411.6" y="1425.9" font-family="Liberation Sans, sans-serif" font-size="5.1" font-weight="700" fill="#eceefa" text-anchor="middle" letter-spacing="0.1" font-style="italic">COMPANY</text></g></svg>
<span class="t" style="left:456.33px;top:1393.13px;font-size:33.87px;font-weight:400;color:#475569;transform:scaleX(0.9836);letter-spacing:0.000px;">Klein, Williams and Rodriguez</span>
<div class="chip" style="left:1185px;top:1379.8px;width:158.3px"></div>
<span class="t" style="left:1204.97px;top:1393.96px;font-size:29.94px;font-weight:400;color:#334155;transform:scaleX(1.0175);letter-spacing:0.000px;-webkit-text-stroke:0.35px #334155;">Maturing</span>
<span class="t" style="left:1596.40px;top:1393.13px;font-size:33.87px;font-weight:400;color:#1e293b;transform:scaleX(1.0009);letter-spacing:0.000px;">06/18/2024 17:30</span>
<div class="chip" style="left:2006.2px;top:1379.8px;width:115.0px"></div>
<span class="t" style="left:2026.22px;top:1393.96px;font-size:29.94px;font-weight:400;color:#334155;transform:scaleX(0.9878);letter-spacing:0.000px;-webkit-text-stroke:0.35px #334155;">Retail</span>
<span class="t" style="left:2416.79px;top:1393.13px;font-size:33.87px;font-weight:400;color:#1e293b;transform:scaleX(0.9069);letter-spacing:0.000px;">112K</span>
<div class="hl" style="top:1604.1px"></div>
<svg class="i" style="left:381.3px;top:1509.7px" width="60" height="60" viewBox="381.3 1509.7 60 60"><defs><clipPath id="c1539"><circle cx="411.3" cy="1539.7" r="26.6"/></clipPath></defs><circle cx="411.3" cy="1539.7" r="26.55" fill="#fff" stroke="#eaecf3" stroke-width="1.5"/><g clip-path="url(#c1539)"><path d="M410.9 1525.6L415.9 1530.6" stroke="#1f2540" stroke-width="2.2" stroke-linecap="round"/><path d="M415.9 1540.4L410.9 1545.1" stroke="#1f2540" stroke-width="2.2" stroke-linecap="round"/><path d="M406.7 1530.8L406.7 1540.1" stroke="#8d93a4" stroke-width="2.0" stroke-linecap="round"/><path d="M411.3 1535.7L419.9 1535.7" stroke="#ee3a2c" stroke-width="1.4" stroke-linecap="round"/><circle cx="410.9" cy="1525.6" r="2.3" fill="#1f2540"/><circle cx="415.9" cy="1530.6" r="2.3" fill="#1f2540"/><circle cx="415.9" cy="1540.4" r="2.3" fill="#1f2540"/><circle cx="410.9" cy="1545.1" r="2.3" fill="#1f2540"/><circle cx="406.7" cy="1530.8" r="2.3" fill="#8d93a4"/><circle cx="406.7" cy="1540.1" r="2.3" fill="#8d93a4"/><circle cx="402.1" cy="1535.7" r="2.4" fill="#ee3a2c"/><circle cx="402.1" cy="1535.7" r="0.9" fill="#ffd23a"/><circle cx="411.3" cy="1535.7" r="2.4" fill="#ee3a2c"/><circle cx="411.3" cy="1535.7" r="0.9" fill="#ffd23a"/><circle cx="419.9" cy="1535.7" r="2.4" fill="#ee3a2c"/><circle cx="419.9" cy="1535.7" r="0.9" fill="#ffd23a"/><text x="411.3" y="1555.3" font-family="Liberation Sans, sans-serif" font-size="3.7" font-weight="700" text-anchor="middle" letter-spacing="0.2"><tspan fill="#3b4055">AUTO</tspan><tspan fill="#ee4a3c">CORN</tspan></text><text x="411.3" y="1558.0" font-family="Liberation Sans, sans-serif" font-size="1.6" font-weight="400" fill="#c2c5cf" text-anchor="middle" letter-spacing="0.2" >tagline goes here</text></g></svg>
<span class="t" style="left:458.30px;top:1523.23px;font-size:33.87px;font-weight:400;color:#475569;transform:scaleX(0.9988);letter-spacing:0.000px;">Young, Campbell and Sutton</span>
<div class="chip" style="left:1185px;top:1509.9px;width:161.5px"></div>
<span class="t" style="left:1207.00px;top:1524.06px;font-size:29.94px;font-weight:400;color:#334155;transform:scaleX(1.0126);letter-spacing:0.000px;-webkit-text-stroke:0.35px #334155;">Adoption</span>
<span class="t" style="left:1596.37px;top:1523.23px;font-size:33.87px;font-weight:400;color:#1e293b;transform:scaleX(1.0334);letter-spacing:0.000px;">06/05/2024 18:30</span>
<div class="chip" style="left:2006.2px;top:1509.9px;width:228.0px"></div>
<span class="t" style="left:2026.24px;top:1524.06px;font-size:29.94px;font-weight:400;color:#334155;transform:scaleX(0.9821);letter-spacing:0.000px;-webkit-text-stroke:0.35px #334155;">Food Services</span>
<span class="t" style="left:2417.64px;top:1523.23px;font-size:33.87px;font-weight:400;color:#1e293b;transform:scaleX(0.9554);letter-spacing:0.000px;">77K</span>
<div class="hl" style="top:1734.2px"></div>
<svg class="i" style="left:381.3px;top:1639.8px" width="60" height="60" viewBox="381.3 1639.8 60 60"><defs><clipPath id="c1669"><circle cx="411.3" cy="1669.8" r="26.6"/></clipPath></defs><circle cx="411.3" cy="1669.8" r="26.55" fill="#fff" stroke="#eaecf3" stroke-width="1.5"/><g clip-path="url(#c1669)"><ellipse cx="410.90000000000003" cy="1666.0" rx="7.6" ry="3.3" transform="rotate(-20 410.90000000000003 1666.0)" fill="#2a3170"/><ellipse cx="410.90000000000003" cy="1666.0" rx="5.2" ry="1.9" transform="rotate(-20 410.90000000000003 1666.0)" fill="none" stroke="#5a63a8" stroke-width="0.6"/><circle cx="411.1" cy="1666.1" r="1" fill="#e8463c"/><path d="M404.90000000000003 1670.6q6 2.2 11.5-1.2" stroke="#aeb3c4" stroke-width="0.7" fill="none"/><text x="411.4" y="1677.2" font-family="Liberation Sans, sans-serif" font-size="4.3" font-weight="700" fill="#161a2e" text-anchor="middle" letter-spacing="0.1" >NEW GALAXY</text><text x="411.4" y="1681.1" font-family="Liberation Sans, sans-serif" font-size="2.0" font-weight="400" fill="#9da2b1" text-anchor="middle" letter-spacing="0.3" >COMPANY</text></g></svg>
<span class="t" style="left:456.27px;top:1653.33px;font-size:33.87px;font-weight:400;color:#475569;transform:scaleX(1.0133);letter-spacing:0.000px;">Hale-Perry</span>
<div class="chip" style="left:1185px;top:1640.0px;width:158.3px"></div>
<span class="t" style="left:1204.97px;top:1654.16px;font-size:29.94px;font-weight:400;color:#334155;transform:scaleX(1.0175);letter-spacing:0.000px;-webkit-text-stroke:0.35px #334155;">Maturing</span>
<span class="t" style="left:1596.37px;top:1653.33px;font-size:33.87px;font-weight:400;color:#1e293b;transform:scaleX(1.0334);letter-spacing:0.000px;">06/18/2024 23:30</span>
<div class="chip" style="left:2006.2px;top:1640.0px;width:115.0px"></div>
<span class="t" style="left:2026.22px;top:1654.16px;font-size:29.94px;font-weight:400;color:#334155;transform:scaleX(0.9878);letter-spacing:0.000px;-webkit-text-stroke:0.35px #334155;">Retail</span>
<span class="t" style="left:2417.62px;top:1653.33px;font-size:33.87px;font-weight:400;color:#1e293b;transform:scaleX(0.9805);letter-spacing:0.000px;">92K</span>
<div class="hl" style="top:1864.3px"></div>
<svg class="i" style="left:381.3px;top:1769.9px" width="60" height="60" viewBox="381.3 1769.9 60 60"><defs><clipPath id="c1799"><circle cx="411.3" cy="1799.8999999999999" r="26.6"/></clipPath></defs><circle cx="411.3" cy="1799.8999999999999" r="26.55" fill="#fff" stroke="#eaecf3" stroke-width="1.5"/><g clip-path="url(#c1799)"><path d="M400.8 1799.6999999999998c-0.6-6 2.4-10.5 8.4-11.4c5-0.8 9.4 1 11 5.4c1.6 0.3 3 2 4.4 3.2c1 0.8 2 0.6 3-0.2c-0.8 1.7-2.4 2.3-4 1.6c-1.5-0.7-2.6-1.7-3.7-1.4c-0.2 1.8-0.7 3.3-1.6 4.3h-3.3c0.6-1.6 0.2-2.8-0.9-3.4c-2.2 0.7-4.6 0.6-6.6-0.2c-1.7 0.6-2.5 2-2.4 3.6h-3.4c-0.3-0.5-0.7-1-0.9-1.5z" fill="#3b9a3d"/><path d="M401.2 1800.1c0.3-2 1.6-3.5 3.6-4.2c-1.2 1.5-1.3 3-0.9 4.2z" fill="#1b2133"/><path d="M404.3 1790.6999999999998c2-2.6 5.6-3.6 9.6-2.6c-3 0.2-6 1-9.6 2.6z" fill="#f2a53a"/><path d="M399.3 1788.1l2.6 3.4l-1.4 1z" fill="#f28b3a"/><circle cx="411.8" cy="1792.1" r="0.6" fill="#f2c43a"/><circle cx="414.8" cy="1793.6" r="0.5" fill="#f2c43a"/><circle cx="408.3" cy="1793.3" r="0.5" fill="#f2c43a"/><text x="411.4" y="1812.3" font-family="Liberation Sans, sans-serif" font-size="6.3" font-weight="400" fill="#4a4f5c" text-anchor="middle" letter-spacing="0.15" >FATTUR 8</text></g></svg>
<span class="t" style="left:456.26px;top:1783.43px;font-size:33.87px;font-weight:400;color:#475569;transform:scaleX(1.0218);letter-spacing:0.000px;">Day-Lewis</span>
<div class="chip" style="left:1185px;top:1770.1px;width:158.3px"></div>
<span class="t" style="left:1204.97px;top:1784.26px;font-size:29.94px;font-weight:400;color:#334155;transform:scaleX(1.0175);letter-spacing:0.000px;-webkit-text-stroke:0.35px #334155;">Maturing</span>
<span class="t" style="left:1596.35px;top:1783.43px;font-size:33.87px;font-weight:400;color:#1e293b;transform:scaleX(1.0538);letter-spacing:0.000px;">05/30/2024 9:30</span>
<div class="chip" style="left:2006.2px;top:1770.1px;width:153.0px"></div>
<span class="t" style="left:2027.17px;top:1784.26px;font-size:29.94px;font-weight:400;color:#334155;transform:scaleX(1.0262);letter-spacing:0.000px;-webkit-text-stroke:0.35px #334155;">Clothing</span>
<span class="t" style="left:2416.70px;top:1783.43px;font-size:33.87px;font-weight:400;color:#1e293b;transform:scaleX(0.9485);letter-spacing:0.000px;">102K</span>
<div class="hl" style="top:1994.4px"></div>
<svg class="i" style="left:381.3px;top:1900.0px" width="60" height="60" viewBox="381.3 1900.0 60 60"><defs><clipPath id="c1929"><circle cx="411.3" cy="1929.9999999999998" r="26.6"/></clipPath></defs><circle cx="411.3" cy="1929.9999999999998" r="26.55" fill="#fff" stroke="#eaecf3" stroke-width="1.5"/><g clip-path="url(#c1929)"><path d="M413.2 1925.2999999999997A7 7 0 1 0 408.8 1935.4999999999998L407.6 1931.2999999999997A2.8 2.8 0 1 1 409.4 1926.4999999999998z" fill="#a9d8ee"/><path d="M409.6 1927.8A7 7 0 1 0 414.0 1917.6L415.2 1921.8A2.8 2.8 0 1 1 413.40000000000003 1926.6z" fill="#a9d8ee"/><path d="M400.7 1928.0L404.5 1928.0L402.6 1924.5z" transform="rotate(20 402.6 1926.5)" fill="#22c55e"/><path d="M401.9 1933.8L405.7 1933.8L403.8 1930.3z" transform="rotate(-40 403.8 1932.3)" fill="#22c55e"/><path d="M406.9 1925.4L410.7 1925.4L408.8 1921.9z" transform="rotate(80 408.8 1923.9)" fill="#22c55e"/><path d="M408.9 1930.4L412.7 1930.4L410.8 1926.9z" transform="rotate(10 410.8 1928.9)" fill="#22c55e"/><path d="M418.3 1928.1L422.1 1928.1L420.2 1924.6z" transform="rotate(200 420.2 1926.6)" fill="#22c55e"/><path d="M417.1 1922.3L420.9 1922.3L419.0 1918.8z" transform="rotate(140 419.0 1920.8)" fill="#22c55e"/><path d="M412.1 1930.7L415.9 1930.7L414.0 1927.2z" transform="rotate(260 414.0 1929.2)" fill="#22c55e"/><path d="M410.3 1925.7L414.1 1925.7L412.2 1922.2z" transform="rotate(190 412.2 1924.2)" fill="#22c55e"/><text x="411.6" y="1941.0" font-family="Liberation Sans, sans-serif" font-size="2.9" font-weight="700" fill="#1d2233" text-anchor="middle" letter-spacing="0.15" >ALGORITHMS LAB</text><text x="411.6" y="1943.8" font-family="Liberation Sans, sans-serif" font-size="1.6" font-weight="400" fill="#c9ccd6" text-anchor="middle" letter-spacing="0.2" >tagline here</text></g></svg>
<span class="t" style="left:456.31px;top:1913.53px;font-size:33.87px;font-weight:400;color:#475569;transform:scaleX(0.9935);letter-spacing:0.000px;">Mason, Casey and Obrien</span>
<div class="chip" style="left:1185px;top:1900.2px;width:195.5px"></div>
<span class="t" style="left:1206.01px;top:1914.36px;font-size:29.94px;font-weight:400;color:#334155;transform:scaleX(0.9883);letter-spacing:0.000px;-webkit-text-stroke:0.35px #334155;">Onboarding</span>
<span class="t" style="left:1596.37px;top:1913.53px;font-size:33.87px;font-weight:400;color:#1e293b;transform:scaleX(1.0295);letter-spacing:0.000px;">05/22/2024 19:30</span>
<div class="chip" style="left:2006.2px;top:1900.2px;width:66.6px"></div>
<span class="t" style="left:2026.26px;top:1914.36px;font-size:29.94px;font-weight:400;color:#334155;transform:scaleX(0.9705);letter-spacing:0.000px;-webkit-text-stroke:0.35px #334155;">IT</span>
<span class="t" style="left:2417.64px;top:1913.53px;font-size:33.87px;font-weight:400;color:#1e293b;transform:scaleX(0.9638);letter-spacing:0.000px;">87K</span>
<svg class="i" style="left:381.3px;top:2030.1px" width="60" height="60" viewBox="381.3 2030.1 60 60"><defs><clipPath id="c2060"><circle cx="411.3" cy="2060.1" r="26.6"/></clipPath><radialGradient id="kg" cx="50%" cy="45%" r="55%"><stop offset="0" stop-color="#f6f7fb"/><stop offset=".7" stop-color="#eceef4"/><stop offset="1" stop-color="#dfe2ec"/></radialGradient></defs><circle cx="411.3" cy="2060.1" r="26.55" fill="url(#kg)" stroke="#c9ccd8" stroke-width="1.5"/><g clip-path="url(#c2060)"><path d="M414.30 2057.20L423.50 2057.20" stroke="#c233b3" stroke-width="1.5"/><path d="M414.06 2058.42L420.52 2061.10" stroke="#5b8fd9" stroke-width="1.5"/><path d="M413.36 2059.46L419.87 2065.97" stroke="#7a5be0" stroke-width="1.5"/><path d="M412.32 2060.16L415.00 2066.62" stroke="#4aa3d9" stroke-width="1.5"/><path d="M411.10 2060.40L411.10 2069.60" stroke="#c233b3" stroke-width="1.5"/><path d="M409.88 2060.16L407.20 2066.62" stroke="#5b8fd9" stroke-width="1.5"/><path d="M408.84 2059.46L402.33 2065.97" stroke="#7a5be0" stroke-width="1.5"/><path d="M408.14 2058.42L401.68 2061.10" stroke="#4aa3d9" stroke-width="1.5"/><path d="M407.90 2057.20L398.70 2057.20" stroke="#c233b3" stroke-width="1.5"/><path d="M408.14 2055.98L401.68 2053.30" stroke="#5b8fd9" stroke-width="1.5"/><path d="M408.84 2054.94L402.33 2048.43" stroke="#7a5be0" stroke-width="1.5"/><path d="M409.88 2054.24L407.20 2047.78" stroke="#4aa3d9" stroke-width="1.5"/><path d="M411.10 2054.00L411.10 2044.80" stroke="#c233b3" stroke-width="1.5"/><path d="M412.32 2054.24L415.00 2047.78" stroke="#5b8fd9" stroke-width="1.5"/><path d="M413.36 2054.94L419.87 2048.43" stroke="#7a5be0" stroke-width="1.5"/><path d="M414.06 2055.98L420.52 2053.30" stroke="#4aa3d9" stroke-width="1.5"/><circle cx="411.1" cy="2057.2" r="4.2" fill="#c233b3"/><path d="M410.5 2053.7999999999997l2.2 4.2l-1.2 4z" fill="#fff"/><path d="M411.40000000000003 2052.2l0.5 9.5" stroke="#f0453a" stroke-width="0.7"/><text x="411.4" y="2073.5" font-family="Liberation Sans, sans-serif" font-size="2.5" font-weight="400" fill="#6d7386" text-anchor="middle" letter-spacing="0.25" >BUSINESS NAME</text></g></svg>
<span class="t" style="left:456.30px;top:2043.63px;font-size:33.87px;font-weight:400;color:#475569;transform:scaleX(1.0018);letter-spacing:0.000px;">King-Weber</span>
<div class="chip" style="left:1185px;top:2030.3px;width:170.0px"></div>
<span class="t" style="left:1205.05px;top:2044.46px;font-size:29.94px;font-weight:400;color:#334155;transform:scaleX(0.9769);letter-spacing:0.000px;-webkit-text-stroke:0.35px #334155;">Renewing</span>
<span class="t" style="left:1596.39px;top:2043.63px;font-size:33.87px;font-weight:400;color:#1e293b;transform:scaleX(1.0085);letter-spacing:0.000px;">06/14/2024 17:30</span>
<div class="chip" style="left:2006.2px;top:2030.3px;width:147.0px"></div>
<span class="t" style="left:2026.21px;top:2044.46px;font-size:29.94px;font-weight:400;color:#334155;transform:scaleX(0.9949);letter-spacing:0.000px;-webkit-text-stroke:0.35px #334155;">Banking</span>
<div class="a" style="left:2621px;top:588px;width:35px;height:1494.5px;background:#f7f8fa;border-left:1.5px solid #e6e8ef"></div>
<div class="a" style="left:2630px;top:595px;width:18px;height:1372px;border-radius:9px;background:#c1c2c5"></div>
</div>
<div class="a" id="panel"></div>
<svg class="i" style="left:2728px;top:260px;" width="64" height="58" viewBox="2728 260 64 58"><g fill="none" stroke="#364153" stroke-width="3.6" stroke-linecap="round" stroke-linejoin="round"><circle cx="2749.1" cy="280.9" r="12.60"/><path d="M2760.60 275.10 H2775.40 a7.00 7.00 0 0 1 7.00 7.00 V302.40 a7.00 7.00 0 0 1 -7.00 7.00 H2750.80 a7.00 7.00 0 0 1 -7.00 -7.00 V292.80"/><line x1="2749.1" y1="275.20" x2="2749.1" y2="281.90"/></g><circle cx="2749.1" cy="286.50" r="2.00" fill="#364153" stroke="none"/></svg>
<span class="t" style="left:2816.60px;top:272.01px;font-size:34.01px;font-weight:400;color:#2f3a4c;transform:scaleX(0.9221);letter-spacing:0.000px;-webkit-text-stroke:1.3px #2f3a4c;">Alert_1</span>
<svg class="i" style="left:3228px;top:262px;" width="52" height="50" viewBox="3228 262 52 50"><g transform="translate(3231.7,266) scale(1.9,1.9)" fill="none" stroke="#3f4b5f" stroke-width="3" stroke-linecap="round" stroke-linejoin="round"><path d="M12 20h9" vector-effect="non-scaling-stroke"/><path d="M16.5 3.5a2.121 2.121 0 0 1 3 3L7 19l-4 1 1-4L16.5 3.5z" vector-effect="non-scaling-stroke"/></g></svg>
<svg class="i" style="left:3312px;top:262px;" width="50" height="50" viewBox="3312 262 50 50"><g transform="translate(3314.8,266.9) scale(1.84,1.84)" fill="none" stroke="#3f4b5f" stroke-width="3" stroke-linecap="round" stroke-linejoin="round"><polyline points="4 14 10 14 10 20" vector-effect="non-scaling-stroke"/><polyline points="20 10 14 10 14 4" vector-effect="non-scaling-stroke"/><line x1="14" y1="10" x2="21" y2="3" vector-effect="non-scaling-stroke"/><line x1="3" y1="21" x2="10" y2="14" vector-effect="non-scaling-stroke"/></g></svg>
<span class="t" style="left:2751.36px;top:366.42px;font-size:34.59px;font-weight:700;color:#4e2fd6;transform:scaleX(0.9363);letter-spacing:0.000px;">Content</span>
<div class="a" style="left:2913px;top:361px;width:1.5px;height:45px;background:#e0e3ec"></div>
<span class="t" style="left:2952.80px;top:366.42px;font-size:34.59px;font-weight:700;color:#475062;transform:scaleX(0.9332);letter-spacing:0.000px;">Appearance</span>
<div class="a" style="left:2704.5px;top:424px;width:675.5px;height:1.5px;background:#e0e3ec"></div>
<div class="a" style="left:2730px;top:421.3px;width:167px;height:5.2px;background:#4b2ed8"></div>
<span class="t" style="left:2733.80px;top:457.01px;font-size:28.34px;font-weight:400;color:#64708a;transform:scaleX(1.0675);letter-spacing:0.000px;-webkit-text-stroke:0.2px #64708a;">Title</span>
<div class="inp" style="top:504px;height:63.5px;border:2px solid #b3a8f5;box-shadow:0 0 0 4.5px #cbc3f9"></div>
<span class="t" style="left:2752.40px;top:520.78px;font-size:28.49px;font-weight:400;color:#1e293b;transform:scaleX(1.0519);letter-spacing:0.000px;">Note:</span>
<span class="t" style="left:2732.37px;top:607.11px;font-size:28.34px;font-weight:400;color:#64708a;transform:scaleX(1.0657);letter-spacing:0.000px;-webkit-text-stroke:0.2px #64708a;">Description</span>
<div class="inp" style="top:654.5px;height:67px"></div>
<span class="t" style="left:2755.00px;top:673.41px;font-size:28.34px;font-weight:400;color:#1e293b;transform:scaleX(1.0171);letter-spacing:0.000px;clip-path:inset(-10px 39px -10px -5px);">4 Accounts are Renewing in Next 5 Days. Please</span>
<span class="t" style="left:2732.40px;top:762.61px;font-size:28.34px;font-weight:400;color:#64708a;transform:scaleX(1.0517);letter-spacing:0.000px;-webkit-text-stroke:0.2px #64708a;">Description Type</span>
<div class="inp" style="top:810px;height:62.5px"></div>
<span class="t" style="left:2752.99px;top:825.88px;font-size:28.49px;font-weight:400;color:#1e293b;transform:scaleX(1.0035);letter-spacing:0.000px;">Plain Text</span>
<svg class="i" style="left:3300px;top:826px;" width="42" height="32" viewBox="3300 826 42 32"><g fill="none" stroke="#4a5568" stroke-width="2.6" stroke-linecap="round" stroke-linejoin="round"><path d="M3311.8 837.6l8.9 8.6 8.9-8.6"/></g></svg>
<span class="t" style="left:2732.42px;top:913.11px;font-size:28.34px;font-weight:400;color:#64708a;transform:scaleX(1.0399);letter-spacing:0.000px;-webkit-text-stroke:0.2px #64708a;">Link Text</span>
<div class="inp" style="top:960.6px;height:62.5px"></div>
<span class="t" style="left:2732.55px;top:1064.31px;font-size:28.34px;font-weight:400;color:#64708a;transform:scaleX(0.9758);letter-spacing:0.000px;-webkit-text-stroke:0.2px #64708a;">Link URL</span>
<div class="inp" style="top:1111.3px;height:62.3px"></div>
<div class="a" style="left:2340px;top:2039.7px;width:364.5px;height:80px;border-radius:9px 0 0 0;background:#e1e4ec"></div>
<span class="t" style="left:2369.61px;top:2066.25px;font-size:38.81px;font-weight:700;color:#131a2e;transform:scaleX(0.9464);letter-spacing:0.000px;">Input Data</span>
<svg class="i" style="left:2630px;top:2066px;" width="44" height="42" viewBox="2630 2066 44 42"><g transform="translate(2636.21,2070.3100000000004) scale(1.33,1.33)" fill="none" stroke="#566175" stroke-width="2.5" stroke-linecap="round" stroke-linejoin="round"><polyline points="15 3 21 3 21 9" vector-effect="non-scaling-stroke"/><polyline points="9 21 3 21 3 15" vector-effect="non-scaling-stroke"/><line x1="21" y1="3" x2="14" y2="10" vector-effect="non-scaling-stroke"/><line x1="3" y1="21" x2="10" y2="14" vector-effect="non-scaling-stroke"/></g></svg>
<div class="a" style="left:2204px;top:222px;width:390px;height:138px;border-radius:7px;background:#6a55ee"></div>
<svg class="i" style="left:2590px;top:268px;" width="30" height="42" viewBox="2590 268 30 42"><path d="M2593 273.5L2612 286.6a3 3 0 0 1 0 4.9L2593 304.6z" fill="#6a55ee"/></svg>
<span class="t" style="left:2220.25px;top:262.96px;font-size:31.83px;font-weight:700;color:#fff;transform:scaleX(1.0257);letter-spacing:0.000px;">Define Alert Properties</span>
<span class="t" style="left:2220.23px;top:300.76px;font-size:31.83px;font-weight:700;color:#fff;transform:scaleX(1.0327);letter-spacing:0.000px;">Here</span>
<div class="a" style="left:2644px;top:249.5px;width:82px;height:82px;border-radius:50%;background:rgba(243,241,254,.93);border:7px solid #cdc6f8"></div>
<div class="a" style="left:2665.5px;top:271px;width:40px;height:40px;border-radius:50%;background:#fff;border:8.3px solid #6a55ee"></div>
</div></body></html>
